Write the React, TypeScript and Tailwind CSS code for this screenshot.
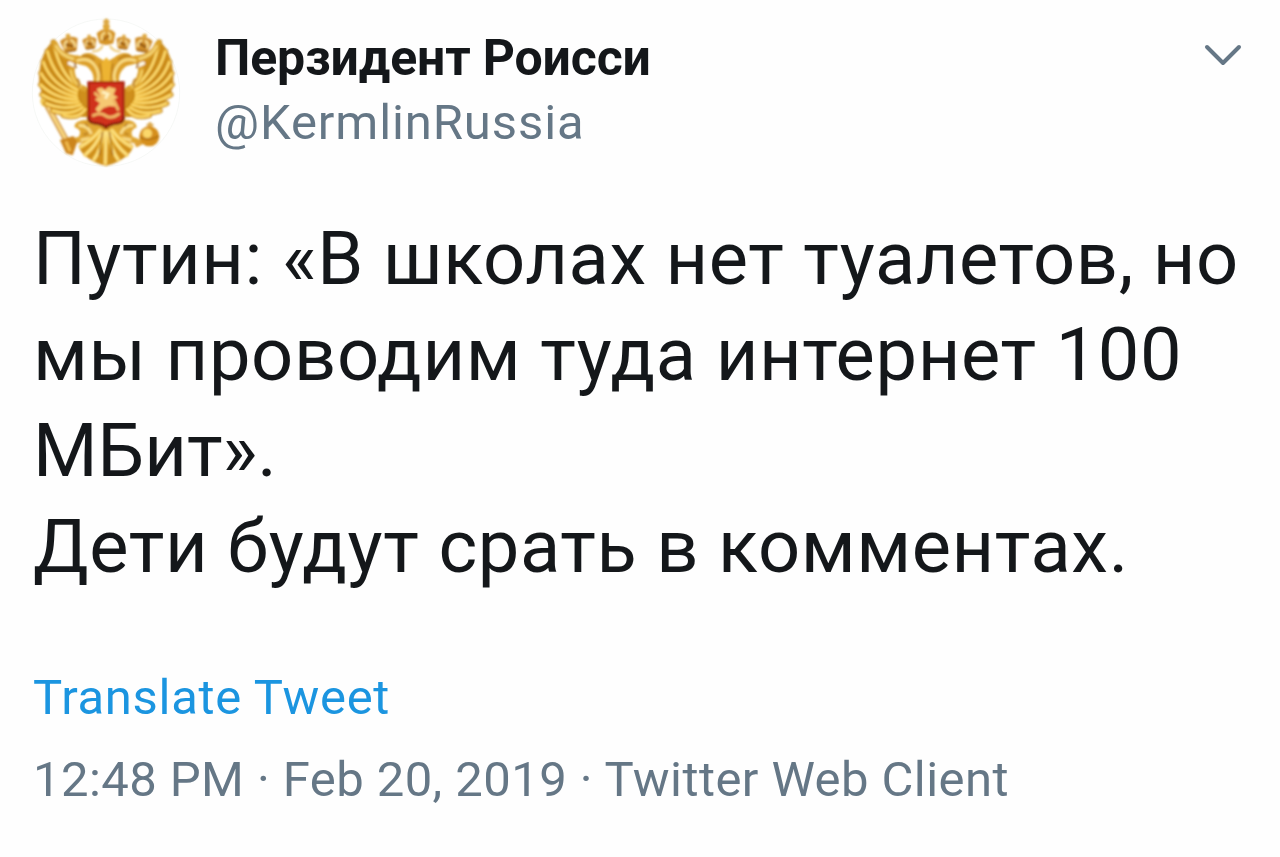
import { ChevronDown } from "lucide-react";

const FEATHERS = [
  "M174 230 C138 205 112 158 100 96",
  "M172 240 C126 218 96 176 82 124",
  "M170 250 C120 234 86 202 70 156",
  "M170 260 C120 250 84 226 63 190",
  "M172 268 C126 268 88 250 62 224",
  "M176 276 C136 284 96 272 66 254",
  "M182 284 C148 298 108 294 78 280",
  "M188 292 C164 310 130 312 98 302",
  "M196 298 C182 318 158 324 130 316",
];

const TAIL = [
  "M240 360 C222 385 200 400 182 410",
  "M246 364 C234 395 215 418 196 434",
  "M252 366 C246 400 236 430 222 448",
  "M258 366 L256 460",
  "M264 366 C270 400 280 430 294 448",
  "M270 364 C282 395 300 418 320 434",
  "M276 360 C294 385 314 400 334 410",
];

function Crown({ x, y, r }: { x: number; y: number; r: number }) {
  return (
    <g transform={`translate(${x} ${y}) rotate(${r}) scale(1.22)`}>
      <path d="M-15 20 L-22 -8 Q-10 -18 0 -12 Q10 -18 22 -8 L15 20 Z" fill="#d08f2c" />
      <path d="M-12 12 Q-14 -4 -3 -6 M3 -6 Q14 -4 12 12" stroke="#fbdf90" strokeWidth="5" fill="none" />
      <path d="M-9 2 L8 10" stroke="#93560f" strokeWidth="6" />
      <circle cx="0" cy="-17" r="6" fill="#dfa942" />
      <path d="M-13 20 H13" stroke="#a8691a" strokeWidth="5" />
    </g>
  );
}

function HalfEagle() {
  return (
    <g fill="none" strokeLinecap="round">
      {/* wing */}
      <path
        d="M102 92 C74 110 54 160 58 222 C66 276 120 320 204 322 L212 238 L178 228 C160 212 160 190 166 168 C148 148 124 124 102 92 Z"
        fill="#cf8f1c"
      />
      {FEATHERS.map((d) => (
        <path key={d} d={d} stroke="#b97b14" strokeWidth="16" />
      ))}
      {FEATHERS.map((d) => (
        <path key={d} d={d} stroke="#efb62b" strokeWidth="11" />
      ))}
      {FEATHERS.map((d) => (
        <path key={d} d={d} stroke="#fde07c" strokeWidth="5" />
      ))}
      <path d="M104 100 C116 130 136 142 164 144 C156 160 150 176 158 196 C164 220 174 230 192 236" stroke="#dca32e" strokeWidth="17" />
      <path d="M108 108 C120 132 140 142 160 146" stroke="#f9dc7c" strokeWidth="6" />
      <path d="M152 182 C156 206 166 222 182 230" stroke="#f7d468" strokeWidth="6" />
      <path d="M148 160 L162 166" stroke="#fffdf2" strokeWidth="10" />
      {/* neck and head */}
      <path d="M258 232 L218 222 C226 200 216 180 198 168 L166 160 C158 148 168 136 182 138 C194 124 218 126 234 142 L258 156 Z" fill="#dda02a" />
      <path d="M172 152 C196 144 216 152 228 172 C238 190 236 206 232 216" stroke="#fbe189" strokeWidth="7" />
      <path d="M188 138 Q206 134 222 148 M240 162 L248 210" stroke="#b87a1a" strokeWidth="5" />
      <path d="M166 160 Q162 166 168 172" stroke="#a0671a" strokeWidth="5" />
      <path d="M172 208 Q180 216 176 228" stroke="#c8933e" strokeWidth="8" />
    </g>
  );
}

function Emblem() {
  return (
    <svg viewBox="0 0 510 495" className="h-[165px] w-[170px]" aria-hidden="true">
      <defs>
        <filter id="soft" x="-5%" y="-5%" width="110%" height="110%">
          <feGaussianBlur stdDeviation="2.8" />
        </filter>
      </defs>
      <circle cx="258" cy="248" r="221" fill="#fff" stroke="#f1f4f1" strokeWidth="2" />
      <g filter="url(#soft)">
        {/* legs, scepter and orb */}
        <path d="M214 330 C186 326 160 336 164 352 C178 358 186 364 176 380 L150 386 L160 400 L212 396 L256 352 Z" fill="#dfa632" />
        <path d="M302 330 C330 326 350 336 350 352 C338 358 330 364 338 380 L364 390 L350 400 L304 396 L260 352 Z" fill="#dfa632" />
        <path d="M176 346 Q206 346 214 372 M340 346 Q310 346 302 372 M182 390 L214 384 M334 390 L302 384" stroke="#fbe08c" strokeWidth="8" fill="none" />
        <path d="M196 340 L204 350 M322 340 L314 350 M190 374 L204 370 M326 374 L314 370" stroke="#b87c22" strokeWidth="5" />
        <path d="M80 284 L144 400" stroke="#cd8d2c" strokeWidth="17" />
        <path d="M80 284 L142 396" stroke="#fbdc88" strokeWidth="8" />
        <circle cx="78" cy="274" r="17" fill="#f0c653" />
        <path d="M120 390 L160 378 L172 396 L158 436 L138 430 Z" fill="#cc851f" />
        <path d="M138 394 L150 424" stroke="#efb94c" strokeWidth="9" />
        <path d="M366 396 L346 406" stroke="#dfa136" strokeWidth="14" />
        <path d="M390 352 V336 M380 345 H400" stroke="#dca748" strokeWidth="7" />
        <circle cx="388" cy="379" r="30" fill="#d68f1a" />
        <circle cx="382" cy="370" r="14" fill="#fbd76a" />
        <path d="M360 382 Q388 396 416 378" stroke="#b06f18" strokeWidth="5" fill="none" />

        <HalfEagle />
        <g transform="translate(518 0) scale(-1 1)">
          <HalfEagle />
        </g>
        <path d="M244 160 L259 142 L274 160 L270 214 H248 Z" fill="#edb431" />

        {/* crowns */}
        <Crown x={148} y={99} r={-10} />
        <Crown x={370} y={99} r={10} />
        <g transform="translate(209 96) scale(.8)">
          <Crown x={0} y={0} r={-6} />
        </g>
        <g transform="translate(310 96) scale(.8)">
          <Crown x={0} y={0} r={6} />
        </g>
        <path d="M238 100 L230 70 Q246 54 259 60 Q274 54 286 70 L280 100 Q258 110 238 100 Z" fill="#d59428" />
        <path d="M246 90 Q242 70 256 68 M264 68 Q276 72 270 90" stroke="#fbe08c" strokeWidth="6" fill="none" />
        <path d="M250 90 L266 76" stroke="#9a5a12" strokeWidth="5" />
        <circle cx="259" cy="50" r="10" fill="#e0a632" />
        <path d="M259 50 V26 M250 35 H268" stroke="#dca742" strokeWidth="9" />
        <path d="M216 124 Q242 124 248 106 M302 124 Q276 124 270 106" stroke="#f0cf84" strokeWidth="7" fill="none" />

        {/* tail */}
        <path d="M238 354 C220 384 196 394 176 406 C180 436 220 458 258 468 C296 458 336 436 340 406 C318 394 296 384 278 354 Z" fill="#cf8f1c" />
        {TAIL.map((d) => (
          <path key={d} d={d} stroke="#f3c03c" strokeWidth="12" fill="none" strokeLinecap="round" />
        ))}
        {TAIL.map((d) => (
          <path key={d} d={d} stroke="#fde68c" strokeWidth="6" fill="none" strokeLinecap="round" />
        ))}
        <path d="M248 364 L238 436 M268 364 L278 436" stroke="#b0700c" strokeWidth="5" />

        {/* shield */}
        <path d="M202 214 H314 V328 Q312 340 298 342 Q270 344 258 358 Q246 344 220 342 Q204 340 202 328 Z" fill="#a8220f" />
        <path d="M209 220 H307 V324 Q306 334 294 335 Q268 338 258 346 Q248 338 222 335 Q210 334 209 324 Z" fill="#d0301a" />
        <path d="M206 318 V328 Q208 338 222 340 Q248 343 258 352 Q268 343 294 340 Q308 338 310 328 V318" stroke="#86210f" strokeWidth="7" fill="none" />
        <path d="M230 238 Q246 226 254 240 L266 230 L288 236 L280 254 L294 262 L278 270 L288 290 L268 288 L250 294 L236 308 L226 298 L240 280 L224 268 L242 260 Z" fill="#f6c872" />
        <path d="M220 316 Q244 306 258 318 Q274 328 296 312 M282 272 L294 298 M226 250 L238 262" stroke="#f0b765" strokeWidth="9" fill="none" strokeLinecap="round" />
        <path d="M246 246 L264 252 L256 266" stroke="#fff3c4" strokeWidth="8" fill="none" />
      </g>
    </svg>
  );
}

export default function App() {
  return (
    <main className="h-[857px] w-[1280px] overflow-hidden bg-[#fefefe] font-['Roboto',sans-serif] text-[#14171a]">
      <header className="flex h-[175px] pt-[10px] pl-5">
        <Emblem />
        <div className="flex grow flex-col pt-[16px] pl-[25px] whitespace-nowrap">
          <h1 className="text-[50px] leading-[64px] font-bold tracking-[-0.15px]">Перзидент Роисси</h1>
          <p className="pt-px text-[49px] leading-[64px] tracking-[0.9px] text-[#657786]">@KermlinRussia</p>
        </div>
        <button className="mt-[13px] mr-[25px] h-16 w-16" aria-label="More">
          <ChevronDown className="h-16 w-16 text-[#657786]" strokeWidth={1.5} />
        </button>
      </header>

      <p className="mt-[36px] pl-[33px] text-[74px] leading-[96px] whitespace-nowrap">
        <span className="block tracking-[0.56px]">Путин: «В школах нет туалетов, но</span>
        <span className="block tracking-[0.63px]">мы проводим туда интернет 100</span>
        <span className="block">МБит».</span>
        <span className="block tracking-[0.61px]">Дети будут срать в комментах.</span>
      </p>

      <footer className="mt-[71px] pl-[33px] text-[49px] whitespace-nowrap">
        <a className="block leading-[64px] tracking-[0.7px] text-[#1b95e0]">Translate Tweet</a>
        <p className="mt-[18px] leading-[64px] tracking-[0.43px] text-[#657786]">
          12:48 PM · Feb 20, 2019 · Twitter Web Client
        </p>
      </footer>
    </main>
  );
}
